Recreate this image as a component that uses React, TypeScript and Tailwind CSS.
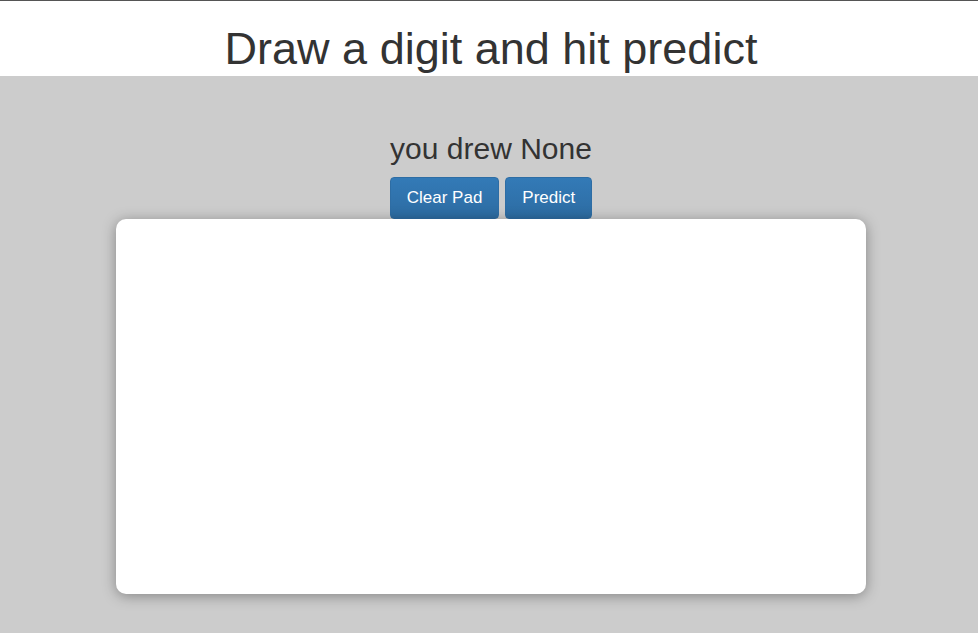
import React from "react";

const App: React.FC = () => {
  return (
    <div className="min-h-[633px] flex flex-col bg-[#cccccc] pl-[4px] font-['Liberation_Sans',Arial,sans-serif] text-[#333333]">
      <div className="border-t border-[#555555] bg-white h-[76px] -ml-[4px] pl-[4px] flex justify-center items-end">
        <h1 className="text-[45px] leading-[45px] pb-[5px]">Draw a digit and hit predict</h1>
      </div>
      <div className="flex flex-col items-center pt-[56px]">
        <h3 className="text-[30px] leading-[33px]">you drew None</h3>
        <div className="flex gap-[6px] mt-[12px]">
          <button className="h-[42px] px-[16px] text-[17px] text-white rounded-[4px] border border-[#2e6da4] bg-gradient-to-b from-[#337ab7] to-[#2d6ca2]">
            Clear Pad
          </button>
          <button className="h-[42px] px-[16px] text-[17px] text-white rounded-[4px] border border-[#2e6da4] bg-gradient-to-b from-[#337ab7] to-[#2d6ca2]">
            Predict
          </button>
        </div>
        <div className="w-[750px] h-[375px] bg-white rounded-[10px] shadow-[0_2px_14px_rgba(0,0,0,0.35)]" />
      </div>
    </div>
  );
};

export default App;
